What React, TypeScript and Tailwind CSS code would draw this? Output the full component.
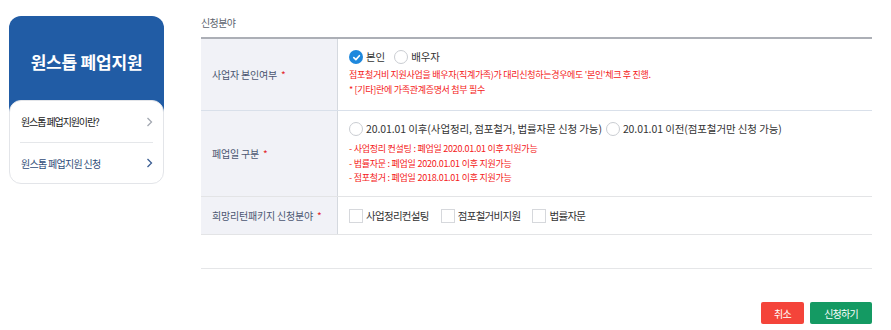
import React from 'react';

type OptionProps = {
  label: string;
  checked?: boolean;
};

function Radio({ label, checked }: OptionProps) {
  return (
    <label className="flex items-center gap-[3px]">
      {checked ? (
        <span className="flex h-[14px] w-[14px] items-center justify-center rounded-full bg-[#1e88dd]">
          <svg width="9" height="9" viewBox="0 0 10 10">
            <path
              d="M2 5.2 4.3 7.4 8.2 3"
              fill="none"
              stroke="white"
              strokeWidth="1.8"
              strokeLinecap="round"
              strokeLinejoin="round"
            />
          </svg>
        </span>
      ) : (
        <span className="h-[14px] w-[14px] rounded-full border border-[#cacdd2] bg-white" />
      )}
      <span className="text-[10.5px] leading-[16px] tracking-[-0.1px] text-[#333]">{label}</span>
    </label>
  );
}

function Checkbox({ label }: OptionProps) {
  return (
    <label className="flex items-center gap-[3px]">
      <span className="h-[14px] w-[14px] border border-[#d6d8dc] bg-white" />
      <span className="text-[10.5px] leading-[16px] tracking-[-0.7px] text-[#333]">{label}</span>
    </label>
  );
}

function Chevron({ color }: { color: string }) {
  return (
    <svg width="7" height="10" viewBox="0 0 7 10">
      <path d="M1.5 1 5.5 5 1.5 9" fill="none" stroke={color} strokeWidth="1.3" />
    </svg>
  );
}

function Label({ text }: { text: string }) {
  return (
    <div className="flex w-[137px] shrink-0 items-center border-r border-[#d5d9df] bg-[#f1f2f7] pl-[11px] text-[10px] tracking-[-0.2px] text-[#4b5671]">
      {text}
      <span className="ml-[4px] text-[#e3262b]">*</span>
    </div>
  );
}

const notes = [
  '- 사업정리 컨설팅 : 폐업일 2020.01.01 이후 지원가능',
  '- 법률자문 : 폐업일 2020.01.01 이후 지원가능',
  '- 점포철거 : 폐업일 2018.01.01 이후 지원가능',
];

export default function App() {
  return (
    <div className="flex h-[330px] w-[891px] bg-white font-['Noto_Sans_CJK_KR',sans-serif]">
      {/* 사이드 메뉴 */}
      <aside className="ml-[9px] mt-[16px] w-[155px] shrink-0 self-start">
        <div className="flex h-[96px] items-center justify-center rounded-t-[12px] bg-[#215ca5] pb-[4px] text-[17px] font-bold tracking-[-0.2px] text-white">
          원스톱 폐업지원
        </div>
        <div className="-mt-[12px] rounded-[12px] border border-[#e3e5e9] bg-white">
          <div className="flex h-[41px] items-center justify-between pl-[11px] pr-[10px] text-[10px] tracking-[-1.1px] text-[#222]">
            원스톱 폐업지원이란?
            <Chevron color="#a3a8b1" />
          </div>
          <div className="mx-[10px] h-px bg-[#e5e7ea]" />
          <div className="flex h-[40px] items-center justify-between pl-[11px] pr-[10px] text-[10px] tracking-[-0.7px] text-[#2f4c78]">
            원스톱 폐업지원 신청
            <Chevron color="#3c5e93" />
          </div>
        </div>
      </aside>

      {/* 신청 폼 */}
      <main className="ml-[37px] w-[671px] shrink-0 pt-[16px]">
        <p className="mb-[7px] text-[10px] leading-[14px] tracking-[-0.6px] text-[#5c636e]">신청분야</p>
        <div className="border-t-2 border-[#acafb6]">
          <div className="flex h-[72px] border-b border-[#d9e0ea]">
            <Label text="사업자 본인여부" />
            <div className="flex flex-col pl-[11px] pt-[10px]">
              <div className="flex gap-[9px]">
                <Radio label="본인" checked />
                <Radio label="배우자" />
              </div>
              <div className="mt-[2px] text-[9px] leading-[15px] tracking-[-0.3px] text-[#f42020]">
                <p>점포철거비 지원사업을 배우자(직계가족)가 대리신청하는경우에도 '본인'체크 후 진행.</p>
                <p>* [기타]란에 가족관계증명서 첨부 필수</p>
              </div>
            </div>
          </div>
          <div className="flex h-[86px] border-b border-[#e3e4e6]">
            <Label text="폐업일 구분" />
            <div className="flex flex-col pl-[11px] pt-[10px]">
              <div className="flex gap-[4px]">
                <Radio label="20.01.01 이후(사업정리, 점포철거, 법률자문 신청 가능)" />
                <Radio label="20.01.01 이전(점포철거만 신청 가능)" />
              </div>
              <div className="mt-[5px] text-[9px] leading-[14.5px] tracking-[-0.25px] text-[#f42020]">
                {notes.map((note) => (
                  <p key={note}>{note}</p>
                ))}
              </div>
            </div>
          </div>
          <div className="flex h-[38px] border-b border-[#e3e4e6]">
            <Label text="희망리턴패키지 신청분야" />
            <div className="flex items-center gap-[12px] pl-[11px]">
              <Checkbox label="사업정리컨설팅" />
              <Checkbox label="점포철거비지원" />
              <Checkbox label="법률자문" />
            </div>
          </div>
        </div>
        <div className="mt-[33px] h-px bg-[#e5e6e8]" />
        <div className="mt-[33px] flex justify-end gap-[6px]">
          <button
            type="button"
            className="h-[22px] w-[43px] rounded-[2px] bg-[#f4443a] text-[10px] tracking-[-0.8px] text-white"
          >
            취소
          </button>
          <button
            type="button"
            className="h-[22px] w-[62px] rounded-[2px] bg-[#149a63] text-[10px] tracking-[-0.8px] text-white"
          >
            신청하기
          </button>
        </div>
      </main>
    </div>
  );
}
